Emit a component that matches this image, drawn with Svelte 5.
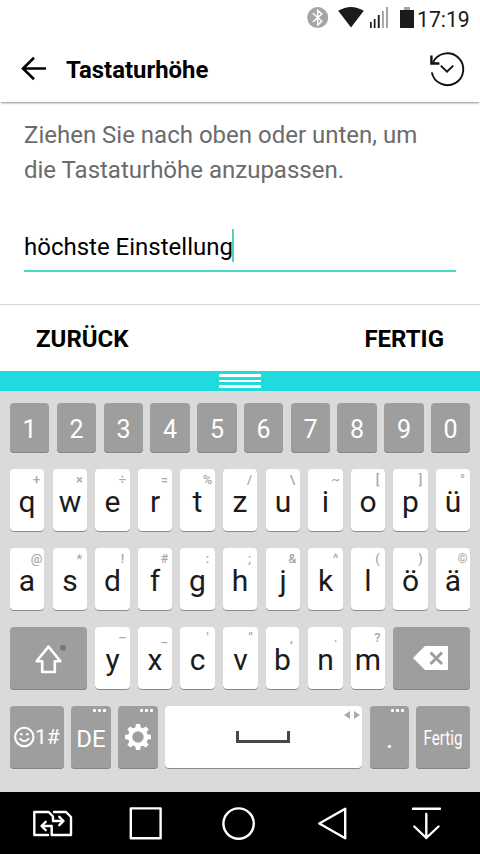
<script lang="ts">
    type Key = { label: string; hint: string }

    const digits = ["1", "2", "3", "4", "5", "6", "7", "8", "9", "0"]

    function keys(labels: string, hints: string): Key[] {
        const marks = [...hints]
        return [...labels].map((label, i) => ({ label, hint: marks[i] }))
    }

    const upper = keys("qwertzuiopü", "+×÷=%/\\~[]°")
    const home = keys("asdfghjklöä", "@*!#:;&^()©")
    const lower = keys("yxcvbnm", "–_'\",.?")

    let text = "höchste Einstellung"
</script>

<div class="screen">
    <div class="status">
        <svg class="bluetooth" width="22" height="22" viewBox="0 0 22 22">
            <circle cx="10.7" cy="10.6" r="10.5" fill="#a5a5a5" />
            <path d="M5.8 6.2 L14.8 14.2 L10.7 18 V3.4 L14.8 7 L5.8 15" fill="none" stroke="#fff" stroke-width="1.5" />
        </svg>
        <svg class="wifi" width="26" height="21" viewBox="0 0 26 21">
            <path d="M0.2 3.8 Q13 -3.8 25.8 3.8 L13 20.6 Z" fill="#1b1b1b" />
        </svg>
        <svg class="signal" width="18" height="21" viewBox="0 0 18 21">
            <path d="M0 15h1.7v6h-1.7z M3.8 12h1.7v9h-1.7z M7.8 8h1.9v13h-1.9z" fill="#1b1b1b" />
            <path d="M12 4h1.9v17h-1.9z M16 0h2v21h-2z" fill="#a5a5a5" />
        </svg>
        <svg class="battery" width="14" height="21" viewBox="0 0 14 21">
            <path d="M4 0h6v3h-6z" fill="#a5a5a5" />
            <path d="M0 3h14v18h-14z" fill="#1b1b1b" />
        </svg>
        <span class="clock">17:19</span>
    </div>

    <header>
        <svg class="back" width="26" height="24" viewBox="0 0 26 24">
            <path d="M25 10.5 H2 M13 -0.3 L2 10.5 L13 21.3" fill="none" stroke="#000" stroke-width="2.6" />
        </svg>
        <h1>Tastaturhöhe</h1>
        <svg class="reset" width="36" height="36" viewBox="0 0 36 36">
            <path d="M3.9 10.7 A15.9 15.9 0 1 1 2.8 20.4" fill="none" stroke="#111" stroke-width="1.9" />
            <path d="M2.4 3.6 V11.5 H10.4" fill="none" stroke="#111" stroke-width="2.4" />
            <path d="M11.8 13.6 L18 19.6 L24.2 13.6" fill="none" stroke="#111" stroke-width="1.9" />
        </svg>
    </header>

    <main>
        <p>Ziehen Sie nach oben oder unten, um<br />die Tastaturhöhe anzupassen.</p>
        <div class="field"><span>{text}</span><i class="caret"></i></div>
    </main>

    <div class="actions">
        <button class="prev">ZURÜCK</button>
        <button class="done">FERTIG</button>
    </div>

    <div class="handle"><i class="thick"></i><i></i><i class="thick"></i></div>

    <div class="keyboard">
        <div class="row digits">
            {#each digits as digit}
                <div class="key dark"><span>{digit}</span></div>
            {/each}
        </div>
        <div class="row letters">
            {#each upper as key}
                <div class="key"><small>{key.hint}</small><span>{key.label}</span></div>
            {/each}
        </div>
        <div class="row letters">
            {#each home as key}
                <div class="key"><small>{key.hint}</small><span>{key.label}</span></div>
            {/each}
        </div>
        <div class="row letters">
            <div class="key dark wide">
                <svg class="shift" width="27" height="30" viewBox="0 0 27 30">
                    <path d="M13.5 2.6 L1.6 17.3 H7.2 V28 H19.8 V17.3 H25.4 Z" fill="none" stroke="#fff" stroke-width="2.6" stroke-linejoin="round" />
                    <circle cx="28" cy="3.8" r="3" fill="#777" />
                </svg>
            </div>
            {#each lower as key}
                <div class="key"><small>{key.hint}</small><span>{key.label}</span></div>
            {/each}
            <div class="key dark wide">
                <svg class="delete" width="35" height="24" viewBox="0 0 35 24">
                    <path d="M0 12 L12 0 H35 V24 H12 Z" fill="#fff" />
                    <path d="M17.5 6.5 L29 18 M29 6.5 L17.5 18" stroke="#9e9e9e" stroke-width="3" />
                </svg>
            </div>
        </div>
        <div class="row bottom">
            <div class="key dark symbols">
                <svg width="22" height="22" viewBox="0 0 22 22">
                    <circle cx="11.3" cy="11" r="9.2" fill="none" stroke="#fff" stroke-width="2.1" />
                    <circle cx="8.3" cy="8.3" r="1.3" fill="#fff" />
                    <circle cx="14.3" cy="8.3" r="1.3" fill="#fff" />
                    <path d="M6.5 12.4 Q11.3 18 16.1 12.4" fill="none" stroke="#fff" stroke-width="1.9" />
                </svg>
                <span>1#</span>
            </div>
            <div class="key dark language">
                <b class="more"></b>
                <span>DE</span>
            </div>
            <div class="key dark settings">
                <b class="more"></b>
                <svg width="26" height="26" viewBox="-13 -13 26 26">
                    <circle r="7.8" fill="none" stroke="#fff" stroke-width="4.2" />
                    {#each [0, 45, 90, 135, 180, 225, 270, 315] as angle}
                        <path d="M-3 -8 L-2 -13 H2 L3 -8 Z" fill="#fff" transform="rotate({angle})" />
                    {/each}
                </svg>
            </div>
            <div class="key space">
                <svg class="swipe" width="16" height="8" viewBox="0 0 16 8">
                    <path d="M0 4 L6 0 V8 Z M16 4 L10 0 V8 Z" fill="#aaa" />
                </svg>
                <i></i>
            </div>
            <div class="key dark period">
                <b class="more"></b>
                <span>.</span>
            </div>
            <div class="key dark enter"><span>Fertig</span></div>
        </div>
    </div>

    <nav>
        <svg width="42" height="36" viewBox="0 0 42 36">
            <path d="M17 29 H3.3 V6 H17.7 L22 10.5 V15 H31 M23 6 H35 L40 11 V29 H20.7 V20 H12" />
            <path d="M28.3 10.8 L32.5 15 L28.3 19.2 M14.7 15.8 L10.5 20 L14.7 24.2" />
        </svg>
        <svg width="36" height="36" viewBox="0 0 36 36">
            <path d="M0.8 2.4 H30.6 V32.2 H0.8 Z" />
        </svg>
        <svg width="36" height="36" viewBox="0 0 36 36">
            <circle cx="15.6" cy="17.6" r="15.2" />
        </svg>
        <svg width="36" height="36" viewBox="0 0 36 36">
            <path d="M4.3 17.5 L30.2 2.8 V32.2 Z" />
        </svg>
        <svg width="36" height="36" viewBox="0 0 36 36">
            <path d="M5 2.7 H32 M18.3 8 V32 M6.3 20.5 L18.3 32 L30.5 20.5" />
        </svg>
    </nav>
</div>

<style>
    :global(body) {
        margin: 0;
    }
    .screen {
        display: flex;
        flex-direction: column;
        width: 480px;
        height: 854px;
        overflow: hidden;
        background: #fff;
        color: #000;
        font-family: Roboto, sans-serif;
    }
    svg {
        display: block;
        flex: none;
        overflow: visible;
    }
    .status {
        display: flex;
        align-items: flex-start;
        height: 37px;
        padding: 7px 0 0 307px;
        box-sizing: border-box;
    }
    .wifi {
        margin-left: 9px;
    }
    .signal {
        margin-left: 6px;
    }
    .battery {
        margin-left: 12px;
    }
    .clock {
        margin-left: 3px;
        color: #1b1b1b;
        font-size: 21.2px;
        line-height: 25px;
    }
    header {
        display: flex;
        align-items: center;
        height: 65px;
        padding: 0 15px 0 21px;
        box-shadow: 0 2px 2px -1px rgba(0, 0, 0, 0.45);
    }
    h1 {
        flex: 1;
        margin: 0 0 0 19px;
        font-size: 23.9px;
        line-height: 28px;
        font-weight: 700;
    }
    main {
        height: 202px;
        padding: 16px 24px 0;
        box-sizing: border-box;
    }
    p {
        margin: 0;
        color: #6b6b6b;
        font-size: 24px;
        line-height: 35px;
        white-space: nowrap;
    }
    .field {
        display: flex;
        height: 41px;
        margin-top: 41px;
        border-bottom: 2px solid #4dd6c1;
        font-size: 24px;
        line-height: 37px;
    }
    .caret {
        width: 2px;
        height: 33px;
        margin: 0 0 0 -1px;
        background: #4dd6c1;
    }
    .actions {
        display: flex;
        justify-content: space-between;
        height: 66px;
        padding: 0 36px;
        border-top: 1px solid #d8d8d8;
    }
    button {
        padding: 2px 0 0;
        border: 0;
        background: none;
        color: #000;
        font: 700 24px/64px Roboto, sans-serif;
    }
    .handle {
        display: flex;
        flex-direction: column;
        align-items: center;
        gap: 3px;
        height: 17px;
        padding-top: 3px;
        background: #1fdbdd;
    }
    .handle i {
        width: 42px;
        height: 2px;
        background: #fff;
    }
    .handle .thick {
        height: 3px;
    }
    .keyboard {
        display: flex;
        flex-direction: column;
        gap: 16px;
        height: 401px;
        padding: 12px 10px 0;
        box-sizing: border-box;
        background: #dadada;
    }
    .row {
        display: grid;
        height: 63px;
    }
    .digits {
        grid-template-columns: 40px 40px 39px 40px 40px 40px 39px 40px 40px 39px;
        gap: 7px;
        height: 50px;
    }
    .letters {
        grid-template-columns: 35px 34px 35px 34px 35px 35px 34px 35px 34px 35px 34px;
        gap: 8px;
    }
    .bottom {
        grid-template-columns: 54px 40px 40px 198px 39px 54px;
        gap: 7px;
    }
    .key {
        position: relative;
        display: flex;
        justify-content: center;
        align-items: center;
        border-radius: 4px;
        background: #fff;
        box-shadow: inset 0 -1px #8a8a8a;
        color: #1b1b1b;
        font-size: 30px;
    }
    .dark {
        background: #9e9e9e;
        box-shadow: inset 0 -1px #848484;
        color: #fff;
    }
    .digits .key {
        font-size: 25px;
    }
    .digits .key:nth-child(1),
    .digits .key:nth-child(2),
    .digits .key:nth-child(6),
    .letters .key:nth-child(1):not(.wide),
    .letters .key:nth-child(6):not(.wide),
    .space {
        margin-right: 1px;
    }
    .key span {
        padding-top: 2px;
        line-height: 30px;
    }
    .digits span {
        padding-top: 4px;
    }
    .wide {
        grid-column: span 2;
    }
    small {
        position: absolute;
        top: 4px;
        right: 0;
        width: 15px;
        color: #a8a8a8;
        font-size: 13px;
        line-height: 14px;
        font-weight: 500;
        text-align: center;
    }
    .delete {
        margin: 0 2px 2px 0;
    }
    .more {
        position: absolute;
        top: 3px;
        right: 5px;
        width: 13px;
        height: 3px;
        background: radial-gradient(circle at 1.5px 1.5px, #fff 1.3px, transparent 1.8px) 0 0 / 5px 3px;
    }
    .symbols {
        justify-content: flex-start;
        padding: 0 0 2px 3px;
        height: 61px;
    }
    .key.symbols span {
        padding: 0;
        font-size: 21px;
    }
    .language {
        font-size: 24px;
    }
    .settings svg {
        margin-bottom: 2px;
    }
    .period {
        font-size: 27px;
    }
    .key.enter span {
        padding: 0;
        font-size: 21px;
        transform: scaleX(0.72);
    }
    .space i {
        width: 48px;
        height: 9px;
        margin: 0 1px 2px 0;
        border: 3px solid #484848;
        border-top: 0;
    }
    .swipe {
        position: absolute;
        top: 5px;
        right: 2px;
    }
    nav {
        display: flex;
        justify-content: space-between;
        height: 62px;
        padding: 14px 36px 0 31px;
        box-sizing: border-box;
        background: #000;
    }
    nav svg {
        fill: none;
        stroke: #fff;
        stroke-width: 2.4;
        stroke-linejoin: round;
        stroke-linecap: round;
    }
</style>
